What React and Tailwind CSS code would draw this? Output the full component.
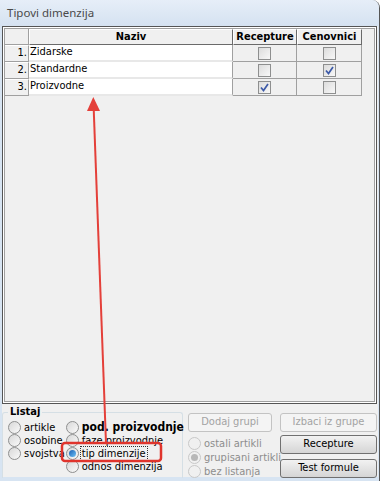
const ROWS = [
  { n: '1.', name: 'Zidarske', rec: false, cen: false },
  { n: '2.', name: 'Standardne', rec: false, cen: true },
  { n: '3.', name: 'Proizvodne', rec: true, cen: false },
];

const BODY_FONT = { fontFamily: '"DejaVu Sans Condensed", "DejaVu Sans", sans-serif' };

function CheckBox({ checked }) {
  return (
    <div className="w-[13px] h-[13px] border border-[#8e8f8f] bg-gradient-to-br from-[#dcdcdc] to-[#f8f8f8] flex items-center justify-center">
      {checked && (
        <svg width="9" height="9" viewBox="0 0 9 9">
          <path d="M1 4.5 L3.5 7.5 L8 1" fill="none" stroke="#3d5aa8" strokeWidth="1.7" />
        </svg>
      )}
    </div>
  );
}

function Radio({ checked, disabled }) {
  return (
    <div
      className={
        'w-[13px] h-[13px] rounded-full border flex items-center justify-center shrink-0 ' +
        (disabled
          ? 'border-[#c8c8c8] bg-[#f0f0f0]'
          : 'border-[#8e8f8f] bg-gradient-to-br from-[#d8d8d8] to-[#fafafa]')
      }
    >
      {checked && (
        <div
          className={
            'w-[7px] h-[7px] rounded-full ' +
            (disabled ? 'bg-[#b8b8b8]' : 'bg-gradient-to-br from-[#1a5fb4] to-[#6fc2f5]')
          }
        />
      )}
    </div>
  );
}

function RadioRow({ label, checked, bold, disabled, focus, tall }) {
  return (
    <div className={'flex items-center gap-[2px] ' + (tall ? 'h-[14px]' : 'h-[13px]')}>
      <Radio checked={checked} disabled={disabled} />
      <span
        className={
          'leading-[13px] px-[1px] whitespace-nowrap ' +
          (bold ? 'font-bold text-[12px] ' : 'text-[11px] ') +
          (disabled ? 'text-[#8d8d8d] ' : 'text-black ') +
          (focus ? 'outline outline-1 outline-dotted outline-[#333] ' : '')
        }
      >
        {label}
      </span>
    </div>
  );
}

function WinButton({ label, disabled }) {
  return (
    <div
      className={
        'h-[19px] rounded-[3px] border flex items-center justify-center text-[11px] ' +
        (disabled
          ? 'border-[#c3c3c3] bg-[#f4f4f4] text-[#a3a3a3]'
          : 'border-[#707070] bg-gradient-to-b from-[#f2f2f2] to-[#d5d5d5] text-black')
      }
    >
      {label}
    </div>
  );
}

export default function App() {
  return (
    <div
      className="relative w-[380px] h-[481px] overflow-hidden bg-[#d7e4f2] border-r border-[#555] rounded-tr-[8px]"
      style={BODY_FONT}
    >
      {/* title bar */}
      <div className="h-[26px] pl-[7px] flex items-center bg-gradient-to-b from-[#e6eef8] to-[#d5e2f1]">
        <span className="text-[11.5px] text-[#4a4a4a]" style={{ fontFamily: '"Noto Sans", sans-serif' }}>
          Tipovi dimenzija
        </span>
      </div>

      {/* client */}
      <div className="ml-[2px] mr-[1px] bg-[#f0f0f0] h-[451px] flex flex-col">
        {/* grid panel */}
        <div className="h-[378px] w-[375px] border border-[#555] shrink-0">
          <div className="h-full border border-white">
            <div className="h-full border border-[#a0a0a0] bg-[#f0f0f0]">
              <div className="grid grid-cols-[24px_204px_64px_65px] text-[11px] text-black">
                {/* header */}
                <div className="h-[16px] bg-[#f0f0f0] border-r border-b border-[#a0a0a0]" />
                <div className="h-[16px] bg-[#f0f0f0] border-t border-l border-white border-r-[#6a6a6a] border-b-[#6a6a6a] border-r border-b flex items-center justify-center font-bold">
                  Naziv
                </div>
                <div className="h-[16px] bg-[#f0f0f0] border-t border-l border-white border-r-[#6a6a6a] border-b-[#6a6a6a] border-r border-b flex items-center justify-center font-bold">
                  Recepture
                </div>
                <div className="h-[16px] bg-[#f0f0f0] border-t border-l border-white border-r-[#6a6a6a] border-b-[#6a6a6a] border-r border-b flex items-center justify-center font-bold">
                  Cenovnici
                </div>
                {/* rows */}
                {ROWS.map((r) => (
                  <div key={r.n} className="contents">
                    <div className="h-[17px] bg-[#f0f0f0] border-r border-b border-[#a0a0a0] border-t border-t-white flex items-center justify-end pr-[1px]">
                      {r.n}
                    </div>
                    <div className="h-[17px] bg-white border-b-2 border-[#e8e8e8] border-r border-r-[#a0a0a0] flex items-center pl-[1px]">
                      {r.name}
                    </div>
                    <div className="h-[17px] border-r border-b border-[#a0a0a0] flex items-center justify-center">
                      <CheckBox checked={r.rec} />
                    </div>
                    <div className="h-[17px] border-r border-b border-[#a0a0a0] flex items-center justify-center">
                      <CheckBox checked={r.cen} />
                    </div>
                  </div>
                ))}
              </div>
            </div>
          </div>
        </div>

        {/* bottom controls */}
        <div className="flex flex-1">
          {/* Listaj group */}
          <div className="relative w-[181px] mt-[8px] border border-[#d5dfe5] rounded-[3px] rounded-b-none border-b-0">
            <span className="absolute -top-[8px] left-[5px] px-[2px] bg-[#f0f0f0] text-[11px] font-bold leading-[14px]">
              Listaj
            </span>
            <div className="flex pt-[8px] pl-[5px]">
              <div className="flex flex-col w-[63px]">
                <RadioRow label="artikle" />
                <RadioRow label="osobine" />
                <RadioRow label="svojstva" />
              </div>
              <div className="flex flex-col">
                <RadioRow label="pod. proizvodnje" bold />
                <RadioRow label="faze proizvodnje" />
                <RadioRow label="tip dimenzije" checked focus />
                <RadioRow label="odnos dimenzija" />
              </div>
            </div>
          </div>

          {/* right side */}
          <div className="flex-1 pl-[5px] pr-[1px] pt-[9px]">
            <div className="flex gap-[8px]">
              <div className="w-[84px]">
                <WinButton label="Dodaj grupi" disabled />
              </div>
              <div className="flex-1">
                <WinButton label="Izbaci iz grupe" disabled />
              </div>
            </div>
            <div className="flex gap-[8px] mt-[3px]">
              <div className="w-[84px] flex flex-col pt-[1px]">
                <RadioRow label="ostali artikli" disabled tall />
                <RadioRow label="grupisani artikli" checked disabled tall />
                <RadioRow label="bez listanja" disabled tall />
              </div>
              <div className="flex-1 flex flex-col gap-[5px]">
                <WinButton label="Recepture" />
                <WinButton label="Test formule" />
              </div>
            </div>
          </div>
        </div>
      </div>

      {/* annotation overlay */}
      <svg className="absolute inset-0 pointer-events-none" width="380" height="481" viewBox="0 0 380 481">
        <line x1="106" y1="443" x2="93.6" y2="106" stroke="#e4403a" strokeWidth="2" />
        <polygon points="93.3,97 87,111 100,111" fill="#e4403a" />
        <rect x="62" y="443" width="99" height="18" rx="3" fill="none" stroke="#e0342c" strokeWidth="2.5" />
      </svg>
    </div>
  );
}
